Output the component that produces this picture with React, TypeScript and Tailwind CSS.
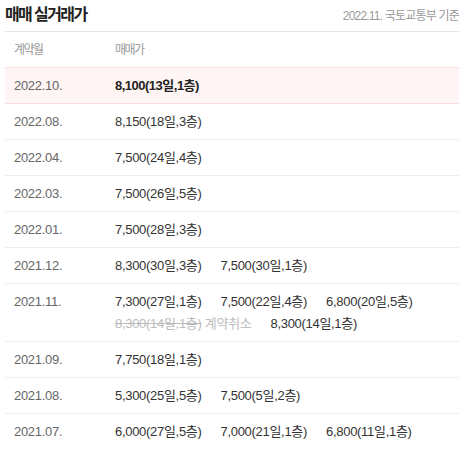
import React from "react";

type Item = { text: string; cancel?: boolean };
type Row = { month: string; items: Item[]; highlight?: boolean };

const rows: Row[] = [
  { month: "2022.10.", items: [{ text: "8,100(13일,1층)" }], highlight: true },
  { month: "2022.08.", items: [{ text: "8,150(18일,3층)" }] },
  { month: "2022.04.", items: [{ text: "7,500(24일,4층)" }] },
  { month: "2022.03.", items: [{ text: "7,500(26일,5층)" }] },
  { month: "2022.01.", items: [{ text: "7,500(28일,3층)" }] },
  { month: "2021.12.", items: [{ text: "8,300(30일,3층)" }, { text: "7,500(30일,1층)" }] },
  {
    month: "2021.11.",
    items: [
      { text: "7,300(27일,1층)" },
      { text: "7,500(22일,4층)" },
      { text: "6,800(20일,5층)" },
      { text: "8,300(14일,1층)", cancel: true },
      { text: "8,300(14일,1층)" },
    ],
  },
  { month: "2021.09.", items: [{ text: "7,750(18일,1층)" }] },
  { month: "2021.08.", items: [{ text: "5,300(25일,5층)" }, { text: "7,500(5일,2층)" }] },
  {
    month: "2021.07.",
    items: [{ text: "6,000(27일,5층)" }, { text: "7,000(21일,1층)" }, { text: "6,800(11일,1층)" }],
  },
];

const font = { fontFamily: '"Liberation Sans", "Noto Sans CJK KR", sans-serif' };

export default function App() {
  return (
    <div className="w-[469px] h-[449px] bg-white overflow-hidden" style={font}>
      <div className="mx-[5px] w-[454px]">
        <div className="flex items-center justify-between h-[32px] border-b border-[#e5e5e5]">
          <h2 className="text-[16px] font-bold text-[#222] tracking-[-1.6px] pb-[1px]">매매 실거래가</h2>
          <span className="text-[12px] text-[#999] tracking-[-0.8px]">2022.11. 국토교통부 기준</span>
        </div>
        <div className="flex items-center h-[35px] text-[12px] text-[#999] tracking-[-1.5px]">
          <div className="w-[110px] pl-[9px]">계약월</div>
          <div>매매가</div>
        </div>
        {rows.map((r) => (
          <div
            key={r.month}
            className={
              r.highlight
                ? "flex border-y border-[#fbdede] bg-[#fff5f5] pt-[7px] pb-[6px] leading-[22px] text-[13px]"
                : "flex border-b border-[#eeeeee] pt-[7px] pb-[6px] leading-[22px] text-[13px]"
            }
          >
            <div className="w-[110px] shrink-0 pl-[9px] text-[#666] tracking-[-0.3px]">{r.month}</div>
            <div className="flex flex-wrap gap-x-[19px] w-[330px]">
              {r.items.map((it, i) =>
                it.cancel ? (
                  <span key={i} className="text-[#bbb] tracking-[-0.3px]">
                    <span className="line-through">{it.text}</span> 계약취소
                  </span>
                ) : (
                  <span
                    key={i}
                    className={
                      r.highlight
                        ? "text-[#222] font-bold tracking-[-0.5px]"
                        : "text-[#333] tracking-[-0.3px]"
                    }
                  >
                    {it.text}
                  </span>
                )
              )}
            </div>
          </div>
        ))}
      </div>
    </div>
  );
}
